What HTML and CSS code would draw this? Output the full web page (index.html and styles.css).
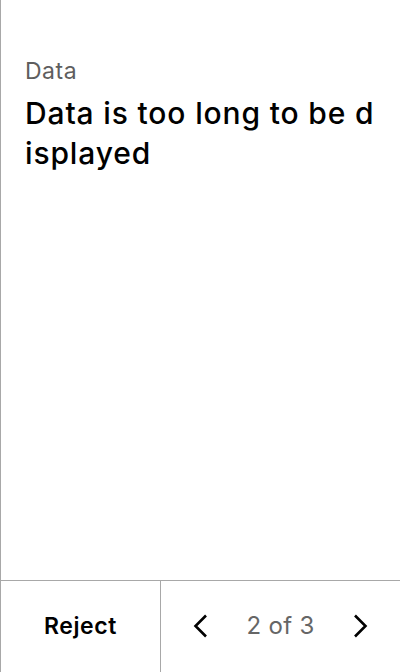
FILE: index.html
```html
<!DOCTYPE html>
<html>
<head>
<meta charset="utf-8">
<link rel="stylesheet" href="styles.css">
</head>
<body>
<div class="screen">
  <main class="content">
    <div class="label">Data</div>
    <div class="value">Data is too long to be displayed</div>
  </main>
  <footer class="bar">
    <button class="reject">Reject</button>
    <div class="pager">
      <button class="nav" aria-label="Previous">
        <svg width="18" height="28" viewBox="0 0 18 28"><path d="M15 3.5 L4.5 14 L15 24.5" fill="none" stroke="#000" stroke-width="2.6"/></svg>
      </button>
      <span class="count">2 of 3</span>
      <button class="nav" aria-label="Next">
        <svg width="18" height="28" viewBox="0 0 18 28"><path d="M3 3.5 L13.5 14 L3 24.5" fill="none" stroke="#000" stroke-width="2.6"/></svg>
      </button>
    </div>
  </footer>
</div>
</body>
</html>
```
FILE: styles.css
```css
* { box-sizing: border-box; }
html, body { margin: 0; padding: 0; background: #fff; }
body { font-family: Inter, "Noto Sans", sans-serif; color: #000; }
.screen {
  width: 400px;
  height: 672px;
  border-left: 1px solid #a8a8a8;
  display: flex;
  flex-direction: column;
}
.content {
  flex: 1;
  padding: 56px 24px 0 24px;
}
.label {
  font-size: 23px;
  line-height: 30px;
  letter-spacing: 0.5px;
  color: #5e5e5e;
}
.value {
  margin-top: 7px;
  font-size: 30px;
  line-height: 40px;
  font-weight: 450;
  letter-spacing: 0.85px;
  word-break: break-all;
}
.bar {
  height: 92px;
  border-top: 1px solid #a8a8a8;
  display: flex;
}
button {
  font-family: inherit;
  background: none;
  border: none;
  padding: 0;
  margin: 0;
  cursor: pointer;
}
.reject {
  width: 160px;
  border-right: 1px solid #a8a8a8;
  font-size: 23px;
  font-weight: 600;
  letter-spacing: 0.6px;
  color: #000;
  padding-bottom: 2px;
}
.pager {
  flex: 1;
  display: flex;
  align-items: center;
  justify-content: space-between;
  padding: 0 30px 2px 30px;
}
.nav { display: flex; align-items: center; justify-content: center; width: 18px; height: 40px; }
.count {
  font-size: 24px;
  letter-spacing: 0.3px;
  color: #666;
}
```
